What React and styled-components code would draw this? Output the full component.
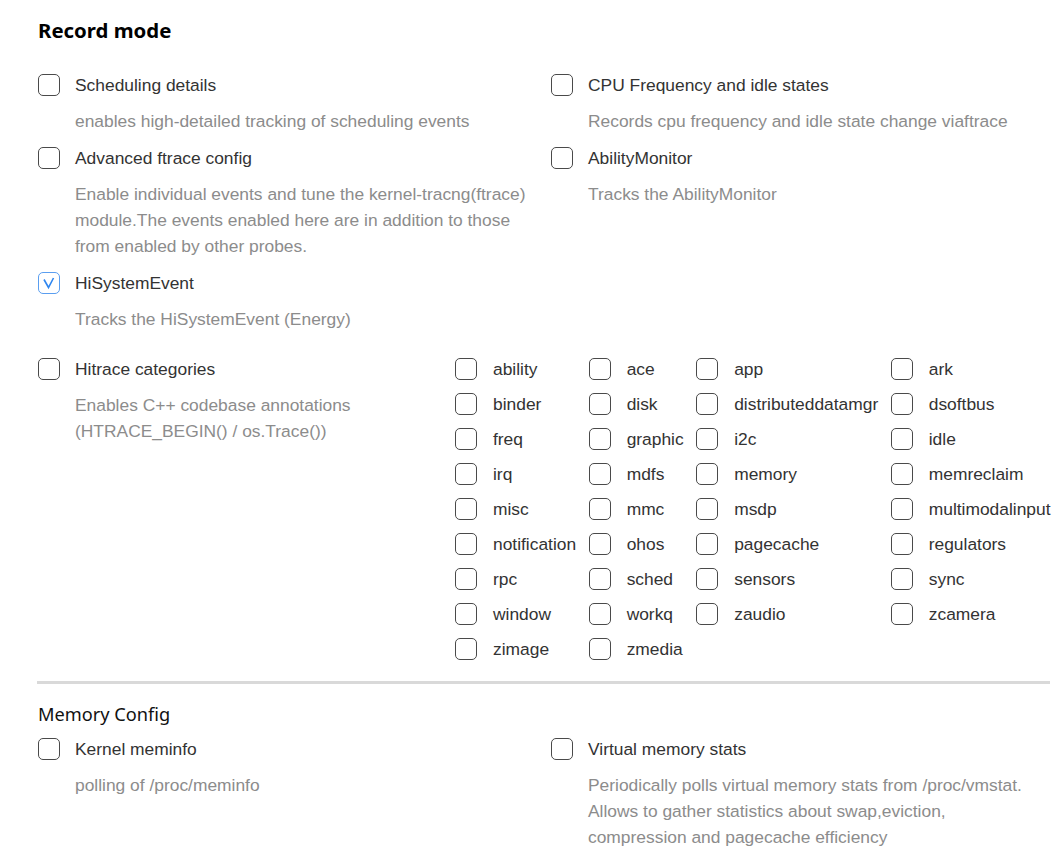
import React, { useState } from 'react';
import styled, { createGlobalStyle } from 'styled-components';

const GlobalStyle = createGlobalStyle`
  body {
    margin: 0;
    background: #fff;
    font-family: "Liberation Sans", Arial, sans-serif;
  }
`;

const recordOptions = [
  { title: 'Scheduling details', desc: 'enables high-detailed tracking of scheduling events' },
  { title: 'CPU Frequency and idle states', desc: 'Records cpu frequency and idle state change viaftrace' },
  {
    title: 'Advanced ftrace config',
    desc: 'Enable individual events and tune the kernel-tracng(ftrace) module.The events enabled here are in addition to those from enabled by other probes.',
  },
  { title: 'AbilityMonitor', desc: 'Tracks the AbilityMonitor' },
  { title: 'HiSystemEvent', desc: 'Tracks the HiSystemEvent (Energy)', checked: true },
];

const categories = [
  'ability', 'ace', 'app', 'ark',
  'binder', 'disk', 'distributeddatamgr', 'dsoftbus',
  'freq', 'graphic', 'i2c', 'idle',
  'irq', 'mdfs', 'memory', 'memreclaim',
  'misc', 'mmc', 'msdp', 'multimodalinput',
  'notification', 'ohos', 'pagecache', 'regulators',
  'rpc', 'sched', 'sensors', 'sync',
  'window', 'workq', 'zaudio', 'zcamera',
  'zimage', 'zmedia',
];

const memoryOptions = [
  { title: 'Kernel meminfo', desc: 'polling of /proc/meminfo' },
  {
    title: 'Virtual memory stats',
    desc: 'Periodically polls virtual memory stats from /proc/vmstat. Allows to gather statistics about swap,eviction, compression and pagecache efficiency',
  },
];

function CheckBox({ checked, onToggle }) {
  return (
    <Box $checked={checked} onClick={onToggle}>
      {checked && (
        <svg width="16" height="16" viewBox="0 0 16 16">
          <polyline points="3,4.5 7.5,12.5 12.5,3" fill="none" stroke="#2f86ef" strokeWidth="1.6" />
        </svg>
      )}
    </Box>
  );
}

function Option({ title, desc, checked, descWidth }) {
  const [on, setOn] = useState(!!checked);
  return (
    <OptionItem>
      <LabelRow>
        <CheckBox checked={on} onToggle={() => setOn(!on)} />
        <LabelText>{title}</LabelText>
      </LabelRow>
      <Desc $width={descWidth}>{desc}</Desc>
    </OptionItem>
  );
}

function Category({ name }) {
  const [on, setOn] = useState(false);
  return (
    <CategoryItem>
      <CheckBox checked={on} onToggle={() => setOn(!on)} />
      <LabelText $gap={16}>{name}</LabelText>
    </CategoryItem>
  );
}

export default function App() {
  return (
    <Page>
      <GlobalStyle />
      <Title>Record mode</Title>
      <TwoCols>
        {recordOptions.map((o) => (
          <Option key={o.title} {...o} descWidth={o.title === 'Advanced ftrace config' ? 460 : undefined} />
        ))}
      </TwoCols>

      <HitraceSection>
        <HitraceLeft>
          <Option
            title="Hitrace categories"
            desc="Enables C++ codebase annotations (HTRACE_BEGIN() / os.Trace())"
            descWidth={300}
          />
        </HitraceLeft>
        <CategoryGrid>
          {categories.map((c) => (
            <Category key={c} name={c} />
          ))}
        </CategoryGrid>
      </HitraceSection>

      <Divider />

      <SubTitle>Memory Config</SubTitle>
      <TwoCols>
        {memoryOptions.map((o) => (
          <Option key={o.title} {...o} descWidth={o.title === 'Virtual memory stats' ? 460 : undefined} />
        ))}
      </TwoCols>
    </Page>
  );
}

const Page = styled.div`
  padding: 16px 0 0 38px;
  width: 1019px;
  overflow: hidden;
`;

const Title = styled.h2`
  margin: 0 0 28px;
  font-family: "Noto Sans", "Liberation Sans", sans-serif;
  font-size: 20.4px;
  font-weight: 700;
  line-height: 28px;
  color: #000;
`;

const SubTitle = styled.h3`
  margin: 0 0 9px;
  font-family: "Noto Sans", "Liberation Sans", sans-serif;
  font-size: 18.2px;
  font-weight: 400;
  line-height: 26px;
  color: #111;
`;

const TwoCols = styled.div`
  display: grid;
  grid-template-columns: 513px 513px;
  row-gap: 11px;
`;

const OptionItem = styled.div`
  display: flex;
  flex-direction: column;
`;

const LabelRow = styled.div`
  display: flex;
  align-items: center;
  height: 26px;
`;

const Box = styled.span`
  box-sizing: border-box;
  flex: 0 0 auto;
  width: 22px;
  height: 22px;
  border: 1px solid ${(p) => (p.$checked ? '#5a9ef0' : '#4a4a4a')};
  border-radius: 5px;
  display: flex;
  align-items: center;
  justify-content: center;
  cursor: pointer;
  background: #fff;
`;

const LabelText = styled.span`
  margin-left: ${(p) => p.$gap || 15}px;
  font-size: 17.4px;
  line-height: 26px;
  color: #333;
  white-space: nowrap;
`;

const Desc = styled.div`
  margin: 10px 0 0 37px;
  max-width: ${(p) => (p.$width ? `${p.$width}px` : 'none')};
  font-size: 17.4px;
  line-height: 26px;
  color: #8c8c8c;
`;

const HitraceSection = styled.div`
  display: flex;
  margin-top: 24px;
`;

const HitraceLeft = styled.div`
  width: 417px;
  flex: 0 0 auto;
`;

const CategoryGrid = styled.div`
  display: grid;
  grid-template-columns: repeat(4, auto);
  justify-content: start;
  column-gap: 12.5px;
  row-gap: 9px;
`;

const CategoryItem = styled.div`
  display: flex;
  align-items: center;
  height: 26px;
`;

const Divider = styled.div`
  width: 1013px;
  margin: 19px 0 17px -1px;
  height: 3px;
  background: #d9d9d9;
`;
